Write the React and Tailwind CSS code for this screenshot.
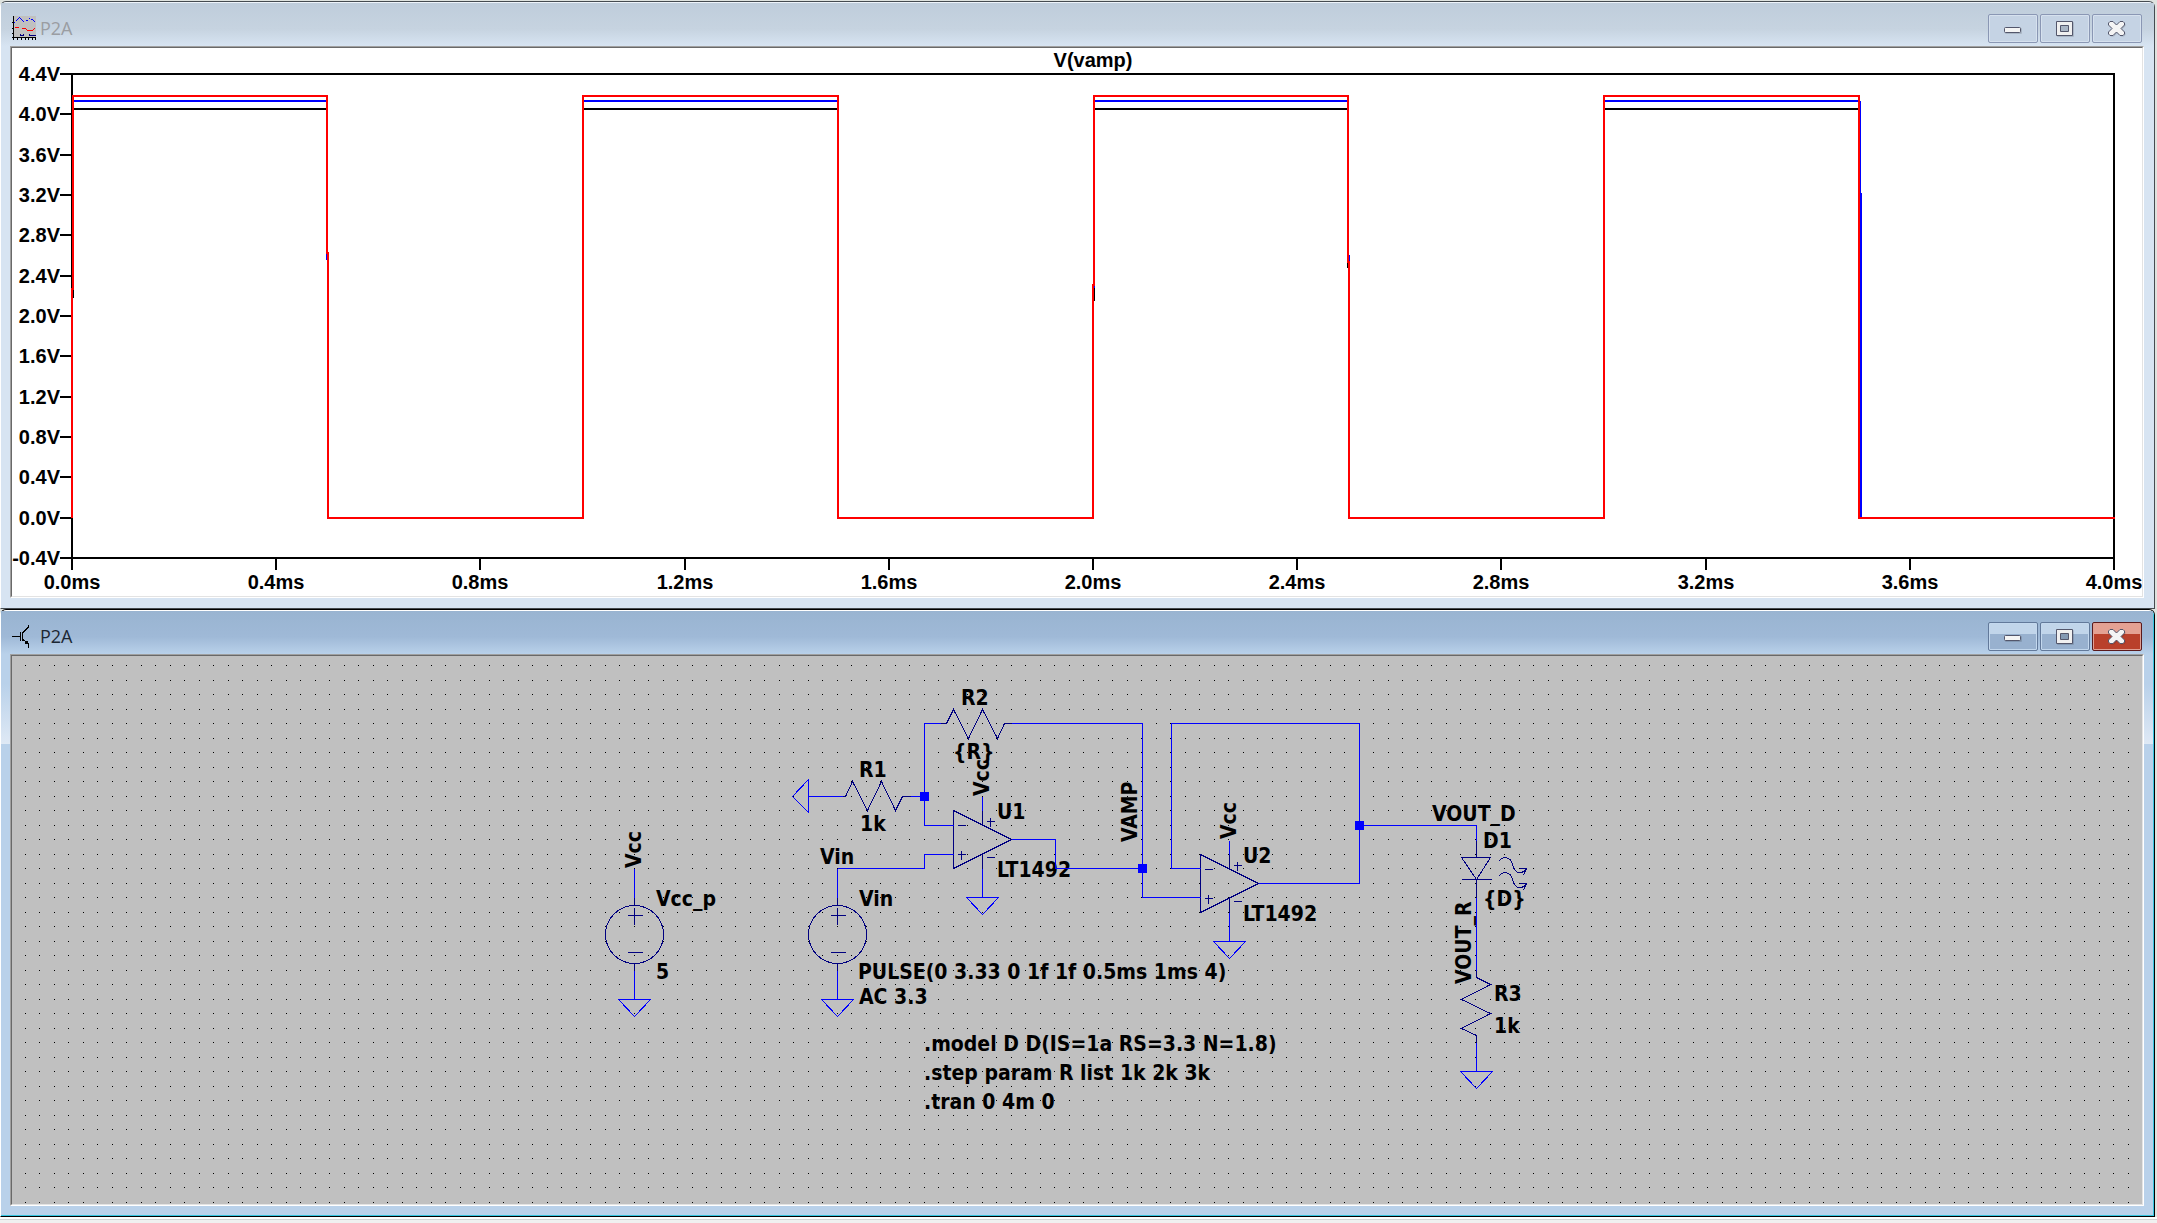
import React from "react";

/* ---------- window chrome ---------- */

function MinimizeGlyph() {
  return (
    <svg width="20" height="17" viewBox="0 0 20 17" aria-hidden="true">
      <rect x="2" y="8" width="17" height="6" rx="1" fill="#00000022" />
      <rect x="1.5" y="7.5" width="16" height="5" rx="1" fill="#f4f4f4" stroke="#53566b" />
    </svg>
  );
}

function MaximizeGlyph() {
  return (
    <svg width="20" height="17" viewBox="0 0 20 17" aria-hidden="true">
      <rect x="2" y="2" width="17" height="15" rx="1" fill="#00000022" />
      <path
        d="M1.5 1.5h16v14h-16zM5.5 5.5v6h8v-6z"
        fill="#f0f0f0"
        fillRule="evenodd"
        stroke="#53566b"
        strokeLinejoin="round"
      />
    </svg>
  );
}

function CloseGlyph() {
  const d =
    "M1.5 3L3 1.5H6L9.5 5L13 1.5H16L17.5 3V5L14 8.5L17.5 12V14L16 15.5H13L9.5 12L6 15.5H3L1.5 14V12L5 8.5L1.5 5Z";
  return (
    <svg width="20" height="17" viewBox="0 0 20 17" aria-hidden="true">
      <path d={d} transform="translate(1 1)" fill="#00000022" />
      <path d={d} fill="#f4f4f4" stroke="#53566b" strokeLinejoin="round" />
    </svg>
  );
}

function WindowButtons({ active }) {
  const base = "flex h-[29px] w-[50px] items-center justify-center rounded-xs border ";
  const plain = active
    ? "border-[#62799a] bg-linear-to-b from-[#c1d5ea] from-40% to-[#98b1cf] to-40% shadow-[inset_0_0_0_1px_#c3d8ee]"
    : "border-[#8a97b4] bg-[#c5d3e4] shadow-[inset_0_0_0_1px_#d6e1ee]";
  const close = active
    ? "border-[#5a1a1c] bg-linear-to-b from-[#e4a193] from-40% to-[#b9402b] to-40% shadow-[inset_0_0_0_1px_#e0a094]"
    : "border-[#8a97b4] bg-[#c5d3e4] shadow-[inset_0_0_0_1px_#d6e1ee]";
  return (
    <div className="flex gap-[2px]">
      <button type="button" aria-label="Minimize" className={base + plain}>
        <MinimizeGlyph />
      </button>
      <button type="button" aria-label="Maximize" className={base + plain}>
        <MaximizeGlyph />
      </button>
      <button type="button" aria-label="Close" className={base + close}>
        <CloseGlyph />
      </button>
    </div>
  );
}

function PlotIcon() {
  return (
    <svg width="24" height="24" viewBox="0 0 24 24" shapeRendering="crispEdges" aria-hidden="true">
      <rect x="1" width="23" height="22" fill="#c0c0c0" />
      <path d="M1.5 0V24M0 21.5H24M0 6.5H2M0 12.5H2M0 17.5H2M5.5 22V24M9.5 22V24M13.5 22V24M16.5 22V24M20.5 22V24M23.5 22V24" stroke="#000" fill="none" />
      <path d="M2 7L7.5 1.5L12.5 6.5M14 5L17.5 2.5L21 3.5L23.5 7" stroke="#0000ff" strokeDasharray="2 1" fill="none" />
      <path d="M3 11.5H7M10 12.5H13L16 14.5H20L23 12.5" stroke="#ff0000" fill="none" />
      <path d="M8.5 18V19.5H11V18M17.5 18V19.5H24" stroke="#000080" fill="none" />
    </svg>
  );
}

function TransistorIcon() {
  return (
    <svg width="24" height="24" viewBox="0 0 24 24" shapeRendering="crispEdges" aria-hidden="true">
      <path d="M0 12.5H8M8.5 8V17M10.5 8V17M11 8.5L16.5 3V0.5M11 15.5L16.5 20V24" stroke="#000" fill="none" />
      <path d="M12 19L15 16L17 21Z" fill="#000" />
    </svg>
  );
}

function AppWindow({ title, icon, active, children }) {
  return (
    <section
      aria-label={title}
      className={
        "mr-[2px] rounded-t-md border border-l-white " +
        (active ? "border-black bg-white" : "border-[#454b50] bg-[#eef4fa]")
      }
    >
      <div
        className={
          "mt-px rounded-t-sm " +
          (active ? "border-r border-b border-[#35c5e0] bg-[#b9d1ea]" : "bg-[#d7e4f2]")
        }
      >
        <header
          className={
            "flex h-[43px] items-center pt-[7px] pl-[11px] " +
            (active
              ? "bg-linear-to-b from-[#99b4d1] via-[#9fb9d7] via-60% to-[#b9d1ea] pr-[11px]"
              : "bg-linear-to-b from-[#bfcddb] via-[#c6d3e0] via-60% to-[#d7e4f2] pr-[12px]")
          }
        >
          {icon}
          <h1
            className={
              "grow pl-1 font-['Open_Sans','Noto_Sans',sans-serif] text-lg " +
              (active ? "text-[#1c2733]" : "text-[#9a9da2]")
            }
          >
            {title}
          </h1>
          <WindowButtons active={active} />
        </header>
        <div
          className={
            "pl-[9px] " +
            (active
              ? "bg-[linear-gradient(#b9d1ea_30px,#dfe9f5_90px,#b9d1ea_90px)] pr-[9px] pb-[9px]"
              : "pr-[10px] pb-[10px]")
          }
        >
          <div className="border border-t-[#a0a0a0] border-r-white border-b-white border-l-[#a0a0a0]">
            <div className="border border-t-[#696969] border-r-[#e3e3e3] border-b-[#e3e3e3] border-l-[#696969]">
              {children}
            </div>
          </div>
        </div>
      </div>
    </section>
  );
}

/* ---------- waveform ---------- */

const voltTicks = ["4.4V", "4.0V", "3.6V", "3.2V", "2.8V", "2.4V", "2.0V", "1.6V", "1.2V", "0.8V", "0.4V", "0.0V", "-0.4V"];
const timeTicks = ["0.0ms", "0.4ms", "0.8ms", "1.2ms", "1.6ms", "2.0ms", "2.4ms", "2.8ms", "3.2ms", "3.6ms", "4.0ms"];
const tickY = (i) => Math.round(74 + (i * 484) / 12);
const tickX = (i) => Math.round(72 + (i * 2042) / 10);
const pulses = [
  [73, 327],
  [583, 838],
  [1094, 1348],
  [1604, 1859],
];

function WavePlot() {
  return (
    <svg viewBox="12 48 2130 548" className="block h-auto w-full bg-white" role="img" aria-label="V(vamp) against time">
      <g fill="none" strokeWidth="2" shapeRendering="crispEdges">
        <g stroke="#000">
          <path d="M72 74H2114V558H72Z" />
          {voltTicks.map((t, i) => (
            <path key={t} d={`M60 ${tickY(i)}H72`} />
          ))}
          {timeTicks.map((t, i) => (
            <path key={t} d={`M${tickX(i)} 558V570`} />
          ))}
        </g>
        {pulses.map(([a, b]) => (
          <g key={a}>
            <path d={`M${a} 109H${b}`} stroke="#000" />
            <path d={`M${a} 101H${b}`} stroke="#00f" />
          </g>
        ))}
        <path d="M73 289V298M1094 288V301M1348 262V268" stroke="#000" />
        <path d="M327 253V260M1094 285V288M1349 255V262M1860 101V193M1861 193V518" stroke="#00f" />
        <path
          d="M72 518V289H73V96H327V253H328V518H583V96H838V518H1093V285H1094V96H1348V262H1349V518H1604V96H1859V518H2115"
          stroke="#f00"
        />
      </g>
      <g className="font-['Liberation_Sans',Arial,sans-serif] text-[20px] font-bold" fill="#000">
        <text x="1093" y="67" textAnchor="middle">V(vamp)</text>
        {voltTicks.map((t, i) => (
          <text key={t} x="60" y={tickY(i) + 7} textAnchor="end">{t}</text>
        ))}
        {timeTicks.map((t, i) => (
          <text key={t} x={tickX(i)} y="589" textAnchor="middle">{t}</text>
        ))}
      </g>
    </svg>
  );
}

/* ---------- schematic ---------- */

const WIRE = "#0000ff";
const PART = "#000080";

let gridDots = "";
for (let r = 0; r < 38; r++) {
  for (let c = 0; c < 146; c++) {
    gridDots += `M${Math.floor(25 + c * 14.505)} ${Math.floor(665.5 + r * 14.505)}h1v1h-1z`;
  }
}

function Ground({ x, y }) {
  return <path d={`M${x - 16} ${y}H${x + 16}L${x} ${y + 17}Z`} stroke={WIRE} />;
}

function Source({ x }) {
  return (
    <g>
      <path d={`M${x} 868V897M${x} 970V999`} stroke={WIRE} />
      <g stroke={PART}>
        <path d={`M${x} 897V905M${x} 963V970M${x - 7} 915H${x + 8}M${x} 907V924M${x - 7} 952H${x + 8}`} />
        <circle cx={x} cy="934" r="29" />
      </g>
      <Ground x={x} y={999} />
    </g>
  );
}

function OpAmp({ x, y }) {
  return (
    <g transform={`translate(${x} ${y})`}>
      <path d="M29 -43V-29M29 29V58" stroke={WIRE} />
      <g stroke={PART}>
        <path d="M0 -29V29L58 0Z" />
        <path d="M29 -29V-14M29 14V29" />
        <path d="M4 -14H12M4 15H12M8 11V20M33 -18H41M37 -22V-13M33 18H41" />
      </g>
      <Ground x={29} y={58} />
    </g>
  );
}

const labels = [
  ["R2", 961, 705],
  ["{R}", 953, 759],
  ["R1", 859, 777],
  ["1k", 860, 831],
  ["U1", 997, 819],
  ["LT1492", 997, 877],
  ["Vin", 820, 864],
  ["Vin", 859, 906],
  ["U2", 1243, 863],
  ["LT1492", 1243, 921],
  ["Vcc_p", 656, 906],
  ["5", 656, 979],
  ["PULSE(0 3.33 0 1f 1f 0.5ms 1ms 4)", 858, 979],
  ["AC 3.3", 859, 1004],
  [".model D D(IS=1a RS=3.3 N=1.8)", 924, 1051],
  [".step param R list 1k 2k 3k", 924, 1080],
  [".tran 0 4m 0", 924, 1109],
  ["VOUT_D", 1432, 821],
  ["D1", 1483, 848],
  ["{D}", 1483, 906],
  ["R3", 1494, 1001],
  ["1k", 1494, 1033],
];

const upright = [
  ["Vcc", 989, 796],
  ["VAMP", 1137, 842],
  ["Vcc", 1236, 839],
  ["Vcc", 641, 868],
  ["VOUT_R", 1471, 984],
];

function Schematic() {
  return (
    <svg viewBox="12 656 2130 548" className="block h-auto w-full bg-[#c0c0c0]" role="img" aria-label="Amplifier schematic">
      <path d={gridDots} fill="#000" shapeRendering="crispEdges" />
      <g className="font-['DejaVu_Sans_Condensed','Noto_Sans',sans-serif] text-[21px] font-bold" fill="#000">
        {labels.map(([t, x, y]) => (
          <text key={`${t}-${x}-${y}`} x={x} y={y}>{t}</text>
        ))}
        {upright.map(([t, x, y]) => (
          <text key={`${t}-${x}`} transform={`translate(${x} ${y}) rotate(-90)`}>{t}</text>
        ))}
      </g>
      <g transform="translate(0.5 0.5)" fill="none" strokeWidth="1" shapeRendering="crispEdges">
        <Source x={634} />
        <Source x={837} />
        <OpAmp x={953} y={839} />
        <OpAmp x={1200} y={883} />
        <Ground x={1476} y={1071} />
        <g stroke={WIRE}>
          <path d="M808 779V812L792 796Z" />
          <path d="M808 796H842M910 796H924M940 723H924V825H953M1011 723H1142V897H1200" />
          <path d="M837 868H924V854H953M1011 839H1055V868H1142" />
          <path d="M1200 868H1171V723H1359V883H1258M1359 825H1476V840" />
          <path d="M1476 897V970M1476 1042V1071" />
        </g>
        <g stroke={PART}>
          <path d="M940 723H946L953 709L968 738L982 709L997 738L1004 723H1011" />
          <path d="M842 796H845L852 781L867 810L881 781L895 810L902 796H910" />
          <path d="M1476 840V857M1461 857H1490L1476 879ZM1461 879H1491M1476 879V897" />
          <path d="M1476 970V977L1490 984L1461 999L1490 1013L1461 1028L1476 1035V1042" />
          <path d="M1498 861Q1501 857 1505 857Q1511 858 1512 864Q1514 872 1519 872Q1524 872 1526 868M1519 868H1526L1523 875" />
          <path d="M1498 876Q1501 872 1505 872Q1511 873 1512 879Q1514 887 1519 887Q1524 887 1526 883M1519 883H1526L1523 890" />
        </g>
      </g>
      <path d="M920 792h9v9h-9zM1138 864h9v9h-9zM1355 821h9v9h-9z" fill={WIRE} shapeRendering="crispEdges" />
    </svg>
  );
}

export default function App() {
  return (
    <div className="flex min-h-screen flex-col bg-[#f0f0f0]">
      <main className="border-b border-[#d4d4d4] bg-white">
        <div className="bg-[#dfe3df] pt-px">
          <AppWindow title="P2A" icon={<PlotIcon />}>
            <WavePlot />
          </AppWindow>
          <AppWindow title="P2A" icon={<TransistorIcon />} active>
            <Schematic />
          </AppWindow>
        </div>
        <div className="h-[2px]" />
      </main>
    </div>
  );
}
